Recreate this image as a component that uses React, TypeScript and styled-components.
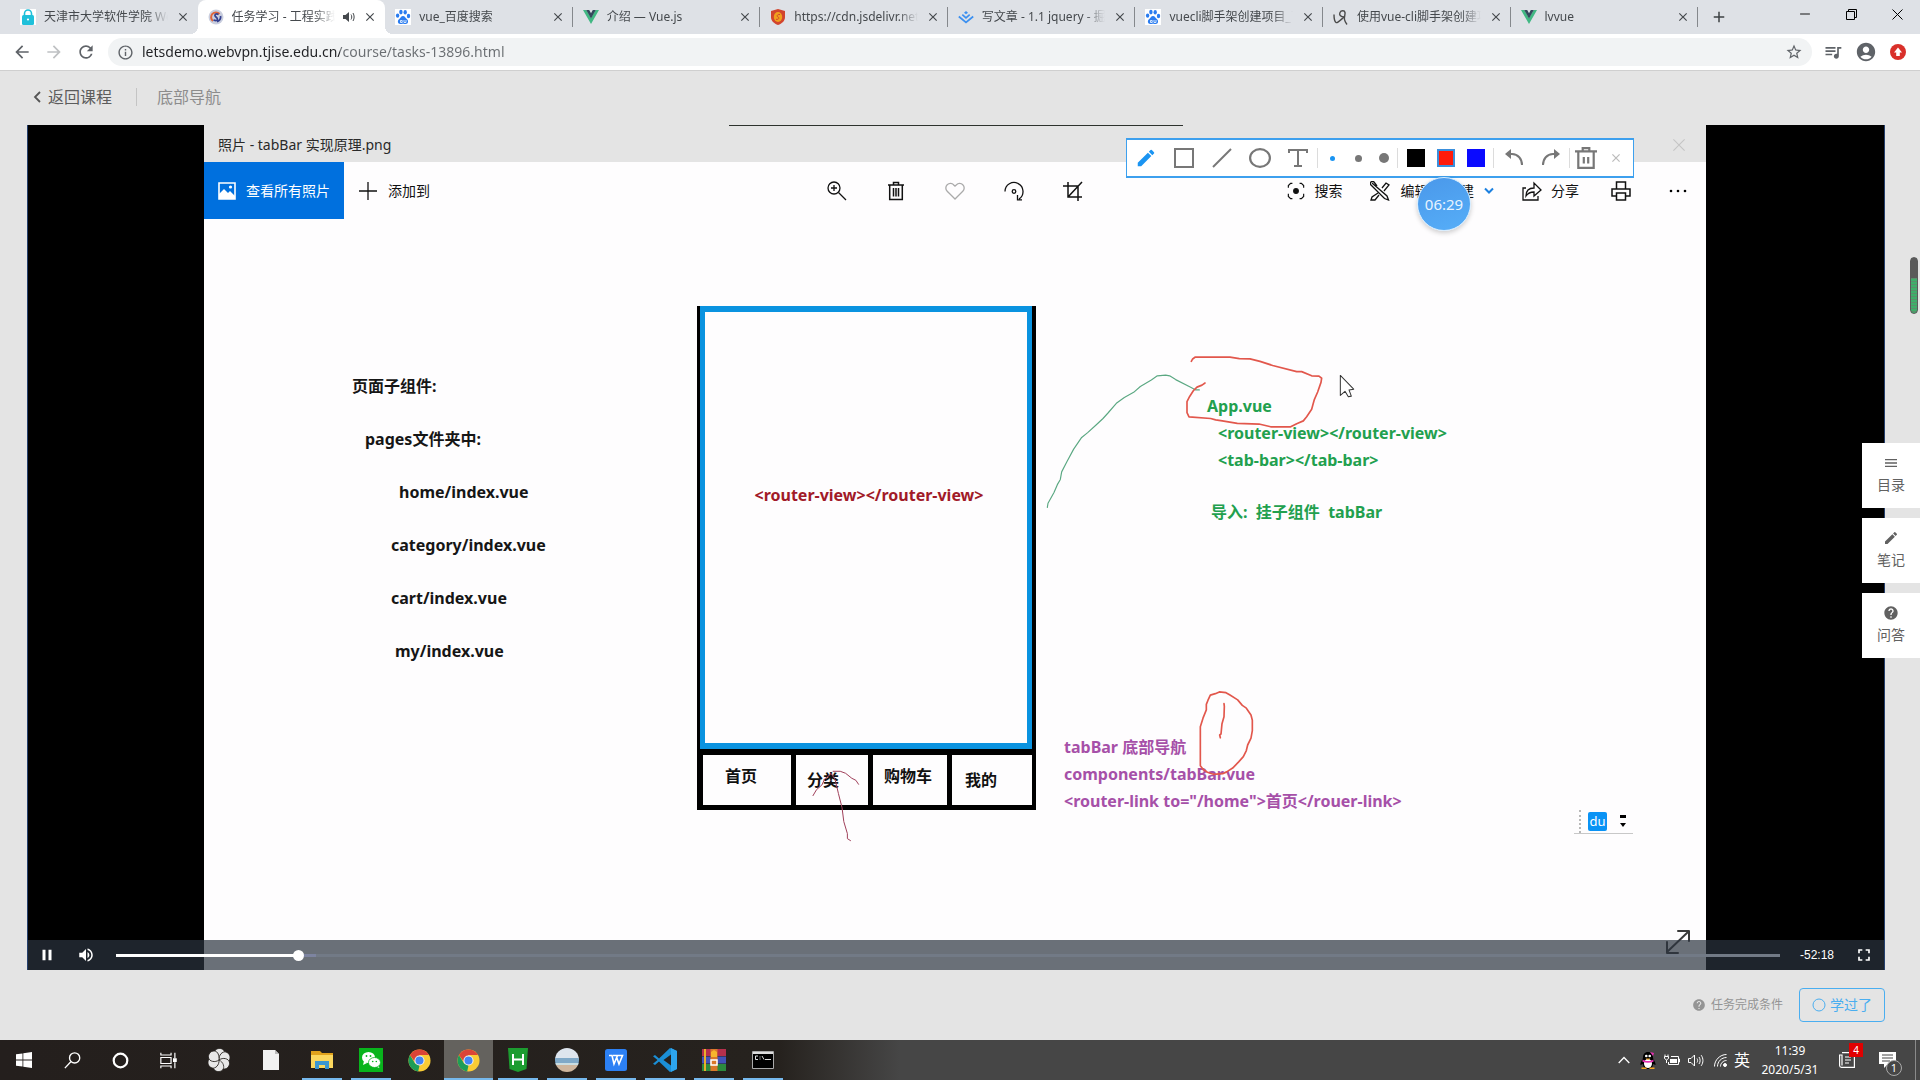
import React from "react";
import styled, { createGlobalStyle, css } from "styled-components";
import {
  MdArrowBack, MdArrowForward, MdRefresh, MdInfoOutline, MdStarBorder, MdQueueMusic,
  MdAccountCircle, MdPause, MdVolumeUp, MdFullscreen, MdEdit, MdHelp, MdClose, MdAdd, MdMenu,
} from "react-icons/md";

const Global = createGlobalStyle`
  * { box-sizing: border-box; }
  body { margin: 0; font-family: "Noto Sans", "Noto Sans CJK SC", sans-serif; font-size: 14px; color: #222; }
  button { margin: 0; padding: 0; border: 0; background: none; font: inherit; color: inherit; cursor: pointer; }
  svg { display: block; flex: none; }
`;

const Screen = styled.div`
  min-height: 100vh;
  display: flex;
  flex-direction: column;
  background: #e4e4e4;
`;

/* ---------- browser chrome ---------- */
const TabStrip = styled.header`
  display: flex;
  height: 34px;
  padding-left: 10px;
  background: #dee1e6;
`;
const TabList = styled.div`
  display: flex;
  flex: 1;
  min-width: 0;
`;
const Tab = styled.div<{ $active?: boolean; $line?: boolean }>`
  position: relative;
  flex: 1;
  min-width: 0;
  display: flex;
  align-items: center;
  gap: 8px;
  padding: 0 8px 0 10px;
  font-size: 12px;
  line-height: 16px;
  color: #45494d;
  ${(p) => p.$line && css`
    background: linear-gradient(#85888c, #85888c) right center / 1px 20px no-repeat;
  `}
  ${(p) => p.$active && css`
    background: #fff;
    border-radius: 8px 8px 0 0;
    &::before, &::after {
      content: "";
      position: absolute;
      bottom: 0;
      width: 8px;
      height: 8px;
    }
    &::before { left: -8px; background: radial-gradient(circle at 0 0, transparent 8px, #fff 8px); }
    &::after { right: -8px; background: radial-gradient(circle at 100% 0, transparent 8px, #fff 8px); }
  `}
`;
const TabTitle = styled.span`
  flex: 1;
  min-width: 0;
  overflow: hidden;
  white-space: nowrap;
  mask-image: linear-gradient(90deg, #000 calc(100% - 20px), transparent);
`;
const IconButton = styled.button<{ $w?: number }>`
  display: flex;
  align-items: center;
  justify-content: center;
  ${(p) => p.$w && `width: ${p.$w}px;`}
`;
const FullscreenButton = styled(IconButton)`
  width: 40px;
  margin-left: 10px;
`;
const NewTab = styled(IconButton)`
  width: 42px;
  color: #3c4043;
`;
const WindowControls = styled.div`
  display: flex;
  align-items: center;
  height: 28px;
  margin-left: 42px;
`;
const AddressRow = styled.div`
  display: flex;
  align-items: center;
  height: 37px;
  padding: 0 6px;
  background: #fff;
  border-bottom: 1px solid #cfcfcf;
  color: #5f6368;
`;
const AddressField = styled.label`
  flex: 1;
  display: flex;
  align-items: center;
  gap: 8px;
  height: 28px;
  margin: 0 4px 0 6px;
  padding: 0 9px;
  border-radius: 14px;
  background: #f1f3f4;
`;
const AddressInput = styled.input`
  flex: 1;
  min-width: 0;
  border: 0;
  outline: 0;
  padding: 0;
  font: 14px/20px "Noto Sans", sans-serif;
  color: #202124;
  -webkit-text-fill-color: transparent;
  background: linear-gradient(90deg, #202124 198px, #6a6e72 198px);
  background-clip: text;
  -webkit-background-clip: text;
`;

/* ---------- course page ---------- */
const Page = styled.main`
  position: relative;
  flex: 1;
  display: flex;
  flex-direction: column;
  padding: 0 35px 0 27px;
`;
const Crumbs = styled.nav`
  display: flex;
  align-items: center;
  height: 54px;
  padding-bottom: 2px;
  font-size: 16px;
  line-height: 24px;
  color: #8c8c8c;
`;
const BackLink = styled.a`
  display: flex;
  align-items: center;
  gap: 6px;
  padding: 0 24px 0 6px;
  color: #5c5c5c;
  text-decoration: none;
`;
const CrumbTitle = styled.span`
  padding-left: 21px;
  background: linear-gradient(#c4c4c4, #c4c4c4) left center / 1px 18px no-repeat;
`;
const Player = styled.section`
  position: relative;
  flex: 1;
  display: flex;
  padding: 0 178px 0 176px;
  border: 1px solid #25406e;
  border-width: 0 1px;
  background: #000;
`;
const Footer = styled.footer`
  display: flex;
  align-items: center;
  justify-content: flex-end;
  gap: 16px;
  height: 70px;
`;
const Condition = styled.span`
  display: flex;
  align-items: center;
  gap: 5px;
  font-size: 12px;
  line-height: 18px;
  color: #949494;
`;
const LearnedButton = styled.button`
  display: flex;
  align-items: center;
  justify-content: center;
  gap: 4px;
  width: 86px;
  height: 34px;
  border: 1px solid #4aaef0;
  border-radius: 4px;
  font-size: 14px;
  line-height: 20px;
  color: #4aaef0;
`;
const SideDock = styled.aside`
  position: absolute;
  right: 0;
  top: 372px;
  display: flex;
  flex-direction: column;
  gap: 10px;
`;
const DockButton = styled.button`
  display: flex;
  flex-direction: column;
  align-items: center;
  gap: 4px;
  width: 58px;
  height: 65px;
  padding-top: 12px;
  background: #fff;
  font-size: 14px;
  line-height: 20px;
  color: #616161;
`;
const Meter = styled.div`
  position: absolute;
  right: 2px;
  top: 186px;
  width: 8px;
  height: 57px;
  border: 1px solid #5a5a5a;
  border-radius: 4px;
  background:
    linear-gradient(#5a5a5a 20px, transparent 20px),
    repeating-linear-gradient(#3fae6a 0 2px, #5a8f6c 2px 3px);
`;

/* ---------- recorded desktop inside the player ---------- */
const Video = styled.div`
  position: relative;
  flex: 1;
  min-width: 0;
  display: flex;
  flex-direction: column;
  background: #fefdfe;
`;
const PhotoTitle = styled.div`
  display: flex;
  align-items: center;
  justify-content: space-between;
  height: 37px;
  padding: 2px 20px 0 14px;
  background: #e4e4e4;
  line-height: 20px;
  color: #2a2a2a;
`;
const TopRule = styled.div`
  position: absolute;
  top: 0;
  left: 525px;
  width: 454px;
  height: 1px;
  background: #2e332e;
`;
const PhotoBar = styled.div`
  display: grid;
  grid-template-columns: 1fr auto 1fr;
  height: 57px;
  line-height: 20px;
  color: #111;
`;
const BarGroup = styled.div<{ $end?: boolean; $gap?: number }>`
  display: flex;
  align-items: stretch;
  gap: ${(p) => p.$gap || 0}px;
  ${(p) => p.$end && "justify-content: flex-end; padding-right: 13px;"}
`;
const BarButton = styled.button<{ $primary?: boolean; $pad?: number; $gap?: number }>`
  display: flex;
  align-items: center;
  gap: ${(p) => p.$gap || 10}px;
  padding: 0 ${(p) => p.$pad || 0}px;
  white-space: nowrap;
  ${(p) => p.$primary && "background: #0070de; color: #fff;"}
`;
const Canvas = styled.div`
  flex: 1;
  display: grid;
  grid-template-columns: 493px 339px 1fr;
  align-items: start;
  padding-top: 87px;
  font-size: 16px;
  line-height: 27px;
  font-weight: 700;
`;
const FileList = styled.ul`
  list-style: none;
  margin: 0;
  padding: 54px 0 0 148px;
  line-height: 53px;
  color: #161616;
`;
const FileItem = styled.li<{ $in: number }>`
  padding-left: ${(p) => p.$in}px;
`;
const Phone = styled.div`
  border: solid #000;
  border-width: 0 4px 0 3px;
`;
const PhoneScreen = styled.div`
  display: flex;
  align-items: center;
  justify-content: center;
  height: 443px;
  padding: 0 0 64px 6px;
  border: 6px solid #0a93e0;
  border-width: 6px 5px;
  color: #a11a28;
`;
const PhoneTabs = styled.div`
  display: grid;
  grid-template-columns: 93px 77px 79px 1fr;
  height: 61px;
  border: solid #000;
  border-width: 6px 0 5px 3px;
`;
const PhoneTab = styled.div<{ $left: number; $raised?: boolean }>`
  display: flex;
  align-items: center;
  padding-left: ${(p) => p.$left}px;
  padding-bottom: ${(p) => (p.$raised ? 8 : 0)}px;
  white-space: nowrap;
  color: #111;
  &:not(:last-child) { border-right: 5px solid #000; }
`;
const Notes = styled.div`
  padding-top: 87px;
  white-space: pre;
`;
const Note = styled.p<{ $in: number; $color: string; $top?: number }>`
  margin: ${(p) => p.$top || 0}px 0 0;
  padding-left: ${(p) => p.$in}px;
  color: ${(p) => p.$color};
`;
const Ink = styled.svg`
  position: absolute;
  inset: 0;
  width: 100%;
  height: 100%;
  fill: none;
  pointer-events: none;
`;
const Markup = styled.div`
  position: absolute;
  top: 13px;
  right: 72px;
  display: flex;
  align-items: center;
  height: 40px;
  padding-right: 2px;
  border: 2px solid #3da0ee;
  border-width: 2px 1px;
  background: #fff;
  color: #777;
`;
const Rule = styled.span`
  width: 1px;
  height: 20px;
  margin-right: 1px;
  background: #dcdcdc;
`;
const Dot = styled.span<{ $d: number; $on?: boolean }>`
  width: ${(p) => p.$d}px;
  height: ${(p) => p.$d}px;
  border-radius: 50%;
  background: ${(p) => (p.$on ? "#1a94f2" : "#777")};
`;
const Swatches = styled.div`
  display: flex;
  gap: 12px;
  padding: 0 8px;
`;
const Swatch = styled.button<{ $c: string; $on?: boolean }>`
  width: 18px;
  height: 18px;
  background: ${(p) => p.$c};
  border: ${(p) => (p.$on ? "2px solid #3a8fdc" : "0")};
`;
const Timer = styled.div`
  position: absolute;
  top: 52px;
  right: 235px;
  display: flex;
  align-items: center;
  justify-content: center;
  width: 54px;
  height: 54px;
  border: 1px solid #d4ecff;
  border-radius: 50%;
  background: linear-gradient(160deg, #4a98ea, #56aef8);
  box-shadow: 0 2px 5px rgba(0, 0, 0, 0.2);
  font-size: 15px;
  line-height: 20px;
  color: #e8f4ff;
`;
const ImeBar = styled.div`
  position: absolute;
  right: 73px;
  bottom: 136px;
  display: flex;
  align-items: center;
  gap: 7px;
  width: 59px;
  height: 25px;
  padding-left: 5px;
  border-bottom: 1px solid #c8c8c8;
`;
const ImeGrip = styled.span`
  height: 23px;
  border-left: 2px dotted #b8b8b8;
`;
const ImeLogo = styled.span`
  flex: none;
  width: 19px;
  height: 19px;
  border-radius: 2px;
  background: #0a93f5;
  font-size: 13px;
  line-height: 18px;
  text-align: center;
  color: #fff;
`;
const Controls = styled.div`
  position: absolute;
  left: 0;
  right: 0;
  bottom: 0;
  display: flex;
  align-items: center;
  height: 30px;
  background: rgba(43, 51, 63, 0.7);
  color: #fff;
`;
const Seek = styled.input`
  appearance: none;
  flex: 1;
  height: 3px;
  margin: 0 20px 0 10px;
  background: linear-gradient(90deg, #fff 11%, #7d84a0 11%, #7d84a0 12%, #727a86 12%);
  outline: 0;
  &::-webkit-slider-thumb {
    appearance: none;
    width: 11px;
    height: 11px;
    border-radius: 50%;
    background: #fff;
  }
`;
const Remaining = styled.span`
  font: 12px/16px "Liberation Sans", sans-serif;
`;

/* ---------- desktop task bar ---------- */
const TaskBar = styled.footer`
  display: flex;
  height: 40px;
  background: linear-gradient(90deg, #241f1d 0, #26221e 780px, #464646 900px);
  color: #fff;
`;
const Task = styled.button<{ $w?: number; $open?: boolean; $active?: boolean }>`
  display: flex;
  align-items: center;
  justify-content: center;
  width: ${(p) => p.$w || 49}px;
  ${(p) => p.$open && "background: linear-gradient(#76b9ed, #76b9ed) center bottom / 40px 2px no-repeat;"}
  ${(p) => p.$active && "background: linear-gradient(#76b9ed, #76b9ed) center bottom / 100% 2px no-repeat, #64625e;"}
`;
const Tray = styled.div`
  display: flex;
  align-items: center;
  margin-left: auto;
`;
const Clock = styled.time`
  width: 68px;
  margin-right: 11px;
  font-size: 12px;
  line-height: 19px;
  text-align: center;
`;
const Ime = styled.button`
  width: 28px;
  font-size: 16px;
  line-height: 20px;
`;
const Notice = styled.button<{ $w: number }>`
  position: relative;
  display: flex;
  align-items: center;
  justify-content: center;
  width: ${(p) => p.$w}px;
  height: 40px;
`;
const RedBadge = styled.span`
  position: absolute;
  top: 3px;
  right: -4px;
  width: 14px;
  height: 14px;
  background: #e00000;
  font-size: 10px;
  line-height: 14px;
`;
const CountBadge = styled.span`
  position: absolute;
  top: 20px;
  right: 13px;
  width: 16px;
  height: 16px;
  border: 1px solid #aaa;
  border-radius: 50%;
  background: #464646;
  font-size: 11px;
  line-height: 14px;
`;
const DesktopEdge = styled.span`
  width: 5px;
  height: 40px;
  border-left: 1px solid #8a8a8a;
`;

/* ---------- drawings ---------- */
const Vue = () => (
  <svg width="16" height="16" viewBox="0 0 16 16"><path d="M0 1h3.3L8 9l4.7-8H16L8 15z" fill="#41b883" /><path d="M3.2 1h3L8 4.200l1.800-3.200h3L8 9.400z" fill="#35495e" /></svg>
);
const Baidu = () => (
  <svg width="16" height="16" viewBox="0 0 16 16"><path fill="#fff" d="M0 0h16v16H0z" /><g fill="#2a7cf0"><ellipse cx="2.600" cy="6.600" rx="1.700" ry="2.200" /><ellipse cx="5.900" cy="3.100" rx="1.700" ry="2.300" /><ellipse cx="10.200" cy="3.200" rx="1.700" ry="2.300" /><ellipse cx="13.500" cy="7" rx="1.700" ry="2.200" /><path d="M8 7c2 0 2.500 2 4 3.300 1.600 1.400 1.500 4.700-1.300 4.700-1.200 0-1.700-.3-2.700-.3s-1.500.3-2.700.3c-2.800 0-3-3.300-1.300-4.700C5.500 9 6 7 8 7z" /></g><path d="M5.500 11.500h1.700v2H5.500zM9 11v2.500h2V11" fill="none" stroke="#fff" strokeWidth=".8" /></svg>
);
const Lock = () => (
  <svg width="16" height="16" viewBox="0 0 16 16"><path fill="#fff" d="M0 0h16v16H0z" /><path d="M4.500 7V4.500a3.500 3.500 0 0 1 7 0V7" fill="none" stroke="#1fc0da" strokeWidth="1.600" /><rect x="2" y="6" width="12" height="10" rx="1.500" fill="#1fc0da" /><circle cx="8" cy="10.500" r="1.100" fill="#fff" /></svg>
);
const Swirl = () => (
  <svg width="16" height="16" viewBox="0 0 16 16"><circle cx="8" cy="8" r="7.500" fill="#c9cede" /><path d="M11.500 5A4.800 4.800 0 1 0 5 12" fill="none" stroke="#e0663c" strokeWidth="2" /><path d="M10.500 5.500C8 4 5.500 6 8 8s2 4.500-2.500 3M9 12.500A4.500 4.500 0 0 0 12.500 7" fill="none" stroke="#34408f" strokeWidth="1.800" /></svg>
);
const Shield = () => (
  <svg width="16" height="16" viewBox="0 0 16 16"><path d="M8 0l7 2v6c0 4-3 6.500-7 8-4-1.500-7-4-7-8V2z" fill="#d2452d" /><ellipse cx="8" cy="8" rx="4.200" ry="5" fill="#f0a01e" /><path d="M10 5.500C7 5 6.500 7.500 8 8s1 3-2 2.300" fill="none" stroke="#d2452d" /></svg>
);
const Juejin = () => (
  <svg width="16" height="16" viewBox="0 0 16 16" fill="none" stroke="#3c90f0" strokeWidth="1.700"><path d="M.8 7.500L8 13.500l7.200-6M4.300 5.700L8 8.800l3.700-3.100" /><path d="M8 2l2 1.700L8 5.300 6 3.700z" fill="#3c90f0" stroke="none" /></svg>
);
const Scribble = () => (
  <svg width="16" height="16" viewBox="0 0 16 16" fill="none" stroke="#4a4a4a" strokeWidth="1.400"><path d="M1 5.500c0 3 .5 7 2 8s4.500-2.500 8-5.500" /><path d="M11.500 8C7 8 6 5.500 7 3.500s4.500-2.500 5 0c.4 2-1 4-.5 7 .3 2 1.500 3.500 2.500 5" /></svg>
);
const Sound = () => (
  <svg width="12" height="10" viewBox="0 0 12 10"><path d="M0 3h2.500L6 0v10L2.500 7H0z" fill="#45494d" /><path d="M8 2.500c1 1.500 1 3.500 0 5M10 1c1.500 2.500 1.500 5.500 0 8" fill="none" stroke="#45494d" /></svg>
);
const Chrome = () => (
  <svg width="23" height="23" viewBox="0 0 24 24"><circle cx="12" cy="12" r="11.500" fill="#f9cc35" /><path d="M2 6.300L7.400 15 12 17.200 10.600 23.400A11.500 11.500 0 0 1 2 6.300z" fill="#1d9d58" /><path d="M2 6.300A11.500 11.500 0 0 1 22 6.300H12L7 13z" fill="#db4437" /><circle cx="12" cy="12" r="5.300" fill="#f1f1f1" /><circle cx="12" cy="12" r="4.200" fill="#4285f4" /></svg>
);
const Line = ({ s = 20, w = 1.300, children }: { s?: number; w?: number; children: React.ReactNode }) => (
  <svg width={s} height={s} viewBox="0 0 20 20" fill="none" stroke="currentColor" strokeWidth={w}>{children}</svg>
);

const tabs = [
  { icon: <Lock />, title: "天津市大学软件学院 WebVPN", line: false },
  { icon: <Swirl />, title: "任务学习 - 工程实践", active: true, sound: true },
  { icon: <Baidu />, title: "vue_百度搜索", line: true },
  { icon: <Vue />, title: "介绍 — Vue.js", line: true },
  { icon: <Shield />, title: "https://cdn.jsdelivr.net/npm", line: true },
  { icon: <Juejin />, title: "写文章 - 1.1 jquery - 掘金", line: true },
  { icon: <Baidu />, title: "vuecli脚手架创建项目_百度", line: true },
  { icon: <Scribble />, title: "使用vue-cli脚手架创建项目", line: true },
  { icon: <Vue />, title: "lvvue", line: true },
];

const files: [string, number][] = [
  ["页面子组件:", 0], ["pages文件夹中:", 13], ["home/index.vue", 47],
  ["category/index.vue", 39], ["cart/index.vue", 39], ["my/index.vue", 43],
];

const GREEN = "#22a04e";
const PURPLE = "#a650a8";

function BrowserChrome() {
  return (
    <>
      <TabStrip>
        <TabList>
          {tabs.map((t) => (
            <Tab key={t.title} $active={t.active} $line={t.line}>
              {t.icon}
              <TabTitle>{t.title}</TabTitle>
              {t.sound && <Sound />}
              <IconButton aria-label="关闭标签页"><MdClose size={14} /></IconButton>
            </Tab>
          ))}
        </TabList>
        <NewTab aria-label="新标签页"><MdAdd size={18} /></NewTab>
        <WindowControls>
          <IconButton $w={46} aria-label="最小化"><Line s={14}><path d="M3 10h14" stroke="#000" /></Line></IconButton>
          <IconButton $w={46} aria-label="还原">
            <svg width="11" height="11" viewBox="0 0 11 11" fill="none" stroke="#000"><path d="M.5 2.500h8v8h-8zM2.500 2.500v-2h8v8h-2" /></svg>
          </IconButton>
          <IconButton $w={46} aria-label="关闭">
            <svg width="11" height="11" viewBox="0 0 11 11" stroke="#000"><path d="M.5.5l10 10M10.500.5l-10 10" /></svg>
          </IconButton>
        </WindowControls>
      </TabStrip>
      <AddressRow>
        <IconButton $w={32} aria-label="后退"><MdArrowBack size={20} /></IconButton>
        <IconButton $w={32} aria-label="前进"><MdArrowForward size={20} color="#bfc1c3" /></IconButton>
        <IconButton $w={32} aria-label="刷新"><MdRefresh size={20} /></IconButton>
        <AddressField>
          <MdInfoOutline size={17} />
          <AddressInput aria-label="地址" defaultValue="letsdemo.webvpn.tjise.edu.cn/course/tasks-13896.html" />
          <MdStarBorder size={18} />
        </AddressField>
        <IconButton $w={33} aria-label="媒体"><MdQueueMusic size={20} /></IconButton>
        <IconButton $w={33} aria-label="用户"><MdAccountCircle size={22} /></IconButton>
        <IconButton $w={32} aria-label="更新">
          <svg width="16" height="16" viewBox="0 0 16 16"><circle cx="8" cy="8" r="8" fill="#d9302a" /><path d="M8 3.500L12 8.500H9.800V12H6.200V8.500H4z" fill="#fff" /></svg>
        </IconButton>
      </AddressRow>
    </>
  );
}

function PhotoToolbar() {
  return (
    <PhotoBar>
      <BarGroup>
        <BarButton $primary $pad={14}>
          <svg width="18" height="18" viewBox="0 0 18 18"><path d="M1 1h16v16H1z" fill="none" stroke="#fff" strokeWidth="1.600" /><path d="M1 12l5-5 4 4 2-2 5 5v3H1z" fill="#fff" /><circle cx="12.500" cy="5" r="1.600" fill="#fff" /></svg>
          查看所有照片
        </BarButton>
        <BarButton $pad={14}>
          <Line s={20}><path d="M10 1v18M1 10h18" /></Line>添加到
        </BarButton>
      </BarGroup>
      <BarGroup $gap={39}>
        <BarButton aria-label="放大"><Line><circle cx="7" cy="7" r="6" /><path d="M11.500 11.500L19 19M4 7h6M7 4v6" /></Line></BarButton>
        <BarButton aria-label="删除"><Line w={1.500}><path d="M2 4h16M7.500 4V1.500h5V4M3.700 4v14.500h12.600V4M7.500 7v8.500M10 7v8.500M12.500 7v8.500" /></Line></BarButton>
        <BarButton aria-label="收藏"><Line><path d="M10 18L2.200 10.200a4.500 4.500 0 0 1 0-6.500c2-2 5-1.700 6.300 0L10 5.200l1.500-1.500c1.500-1.700 4.500-2 6.300 0a4.500 4.500 0 0 1 0 6.500z" stroke="#aaa" /></Line></BarButton>
        <BarButton aria-label="旋转"><Line><path d="M1 10.500A9 9 0 1 1 15 18M13.500 14v4.800h4.500" /><circle cx="10" cy="10.500" r="1.800" /></Line></BarButton>
        <BarButton aria-label="裁剪"><Line w={1.500}><path d="M5 1v15h14M0 5h15v15M5 16L19 1" /></Line></BarButton>
      </BarGroup>
      <BarGroup $end $gap={28}>
        <BarButton $gap={9}>
          <Line s={18}><path d="M6 1.500H4L1.500 4v2.500M14 1.500h2L18.500 4v2.500M1.500 13v3L4 18.500h2M18.500 13v3L16 18.500h-2" /><circle cx="10" cy="10" r="2.600" fill="currentColor" /></Line>搜索
        </BarButton>
        <BarButton $gap={10}>
          <Line><path d="M2 2l15 13 1.500 4-4-1.500L1 4a2 2 0 0 1 3-3l3 4M12 7l4-5 3 2-5 6M8 12l-6 4-1 3h4l4-5" /></Line>
          编辑 &amp; 创建
          <svg width="10" height="10" viewBox="0 0 10 10" fill="none" stroke="#1c80e0" strokeWidth="2"><path d="M1 2.500l4 4 4-4" /></svg>
        </BarButton>
        <BarButton $gap={9}>
          <Line><path d="M4 7H1v12h15v-4M4 15c0-5 3-8 8-8V2l7 7-7 6v-4c-4 0-6 1-8 4z" /></Line>分享
        </BarButton>
        <BarButton $pad={4} aria-label="打印"><Line w={1.500}><path d="M5.500 8V1h9v7M5.500 15H1V8h18v7h-4.500M5.500 12h9v7h-9z" /></Line></BarButton>
        <BarButton $pad={6} aria-label="更多">
          <svg width="18" height="4" viewBox="0 0 18 4"><circle cx="2" cy="2" r="1.300" /><circle cx="9" cy="2" r="1.300" /><circle cx="16" cy="2" r="1.300" /></svg>
        </BarButton>
      </BarGroup>
    </PhotoBar>
  );
}

function Annotator() {
  return (
    <Markup>
      <IconButton $w={38} aria-label="画笔"><MdEdit size={22} color="#1a94f2" /></IconButton>
      <IconButton $w={38} aria-label="矩形"><Line w={2}><path d="M1 1h18v18H1z" /></Line></IconButton>
      <IconButton $w={38} aria-label="直线"><Line w={2}><path d="M1 19L19 1" /></Line></IconButton>
      <IconButton $w={38} aria-label="椭圆"><Line s={22} w={2}><ellipse cx="10" cy="10" rx="9" ry="8" /></Line></IconButton>
      <IconButton $w={38} aria-label="文字"><Line w={2}><path d="M1 5V2h18v3M10 2v16M6 18h8" /></Line></IconButton>
      <Rule />
      <IconButton $w={26} aria-label="细"><Dot $d={5} $on /></IconButton>
      <IconButton $w={26} aria-label="中"><Dot $d={7} /></IconButton>
      <IconButton $w={26} aria-label="粗"><Dot $d={10} /></IconButton>
      <Rule />
      <Swatches>
        <Swatch $c="#000" aria-label="黑" />
        <Swatch $c="#ff1a0a" $on aria-label="红" />
        <Swatch $c="#0a0aff" aria-label="蓝" />
      </Swatches>
      <Rule />
      <IconButton $w={37} aria-label="撤销"><Line w={2}><path d="M3 6h5c6 0 10 5 10 11" /><path d="M7 1v10L1 6z" fill="currentColor" stroke="none" /></Line></IconButton>
      <IconButton $w={37} aria-label="重做"><Line w={2}><path d="M17 6h-5C6 6 2 11 2 17" /><path d="M13 1v10l6-5z" fill="currentColor" stroke="none" /></Line></IconButton>
      <Rule />
      <IconButton $w={30} aria-label="清空"><Line s={22} w={2}><path d="M0 4h20M7 4V1h6v3M3 4v15h14V4M8 9v6M12 9v6" /></Line></IconButton>
      <IconButton $w={30} aria-label="关闭标注"><Line s={8}><path d="M1 1l18 18M19 1L1 19" stroke="#bbb" strokeWidth="3" /></Line></IconButton>
    </Markup>
  );
}

function Recording() {
  return (
    <Video>
      <PhotoTitle>
        照片 - tabBar 实现原理.png
        <Line s={14}><path d="M2 2l16 16M18 2L2 18" stroke="#c4c4c4" strokeWidth="1.500" /></Line>
      </PhotoTitle>
      <TopRule />
      <PhotoToolbar />
      <Canvas>
        <FileList>
          {files.map(([name, indent]) => <FileItem key={name} $in={indent}>{name}</FileItem>)}
        </FileList>
        <Phone>
          <PhoneScreen>{"<router-view></router-view>"}</PhoneScreen>
          <PhoneTabs>
            <PhoneTab $left={22} $raised>首页</PhoneTab>
            <PhoneTab $left={11}>分类</PhoneTab>
            <PhoneTab $left={11} $raised>购物车</PhoneTab>
            <PhoneTab $left={13}>我的</PhoneTab>
          </PhoneTabs>
        </Phone>
        <Notes>
          <Note $in={171} $color={GREEN}>App.vue</Note>
          <Note $in={182} $color={GREEN}>{"<router-view></router-view>"}</Note>
          <Note $in={182} $color={GREEN}>{"<tab-bar></tab-bar>"}</Note>
          <Note $in={175} $color={GREEN} $top={25}>{"导入:  挂子组件  tabBar"}</Note>
          <Note $in={28} $color={PURPLE} $top={208}>tabBar 底部导航</Note>
          <Note $in={28} $color={PURPLE}>components/tabBar.vue</Note>
          <Note $in={28} $color={PURPLE}>{'<router-link to="/home">首页</rouer-link>'}</Note>
        </Notes>
      </Canvas>
      <Ink viewBox="0 0 1502 845" preserveAspectRatio="xMinYMin meet" strokeLinejoin="round" strokeLinecap="round">
        <g transform="translate(826 205) scale(.33333 .3444)">
          <path d="M52 515l2-12 18-31 10-23 9-15 4-22 16-30 20-36 24-34 18-14 26-23 20-18 15-16 25-28 24-17 28-15 20-17 33-19 18-12 25-2 12 2 18 11 45 22 15 8h11" stroke="#5aa882" strokeWidth="3.500" />
          <path d="M484 91l4-7 7-5h105l28 4 32 1 30 7 38 12 72 18h15l30 12 22 1 8 6-2 12-10 28-10 22-8 28-15 22-10 12-20 8-18 9h-60l-35-8-65-2-45-7-20-3-15-4-65-5-6-12v-32l8-15 12-18 10-9 15-6 9-6" stroke="#e2574c" strokeWidth="5" />
          <path d="M541 1060l15-4 12-5 20 2 12 7 23 14 14 16 12 8 14 20 4 15v30l-4 22-10 20-4 16-9 18-14 15-18 18-18 11-12 5-28 2-18-6-14-10-7-9v-113l8-25 10-24v-16l5-12z" stroke="#e2574c" strokeWidth="5" />
          <path d="M582 1085l1 8-1 30-6 20-3 30-4 3 2 8" stroke="#e2574c" strokeWidth="5" />
          <path d="M931 132v58l14-12 10 16 9-2-7-18 14-2z" fill="#fff" stroke="#333" strokeWidth="3" />
        </g>
        <g transform="translate(126 225) scale(.4464 .3333)" stroke="#a0405a">
          <path vectorEffect="non-scaling-stroke" d="M1127 1264h16l12 6 14 15 9 6 6 12M1082 1337l8-18 12-14 6-18 10-10 4-7 8 15 3 12 6 34 8 42 4 42 8 36v15l7 6" />
        </g>
        <path d="M1463 827l21-20M1474 806h11v10M1463 817v11h11" stroke="#3a3a3a" strokeWidth="2" />
      </Ink>
      <Annotator />
      <Timer>06:29</Timer>
      <ImeBar>
        <ImeGrip />
        <ImeLogo>du</ImeLogo>
        <svg width="24" height="12" viewBox="0 0 24 12"><path d="M6 0h6v3H6zM6 8h6l-3 4z" /></svg>
      </ImeBar>
    </Video>
  );
}

function TaskIcons() {
  return (
    <>
      <Task $w={48} aria-label="开始">
        <svg width="16" height="16" viewBox="0 0 16 16" fill="#fff"><path d="M0 2.300L6.500 1.400v6.200H0zM7.300 1.300L16 0v7.600H7.300zM0 8.400h6.500v6.200L0 13.700zM7.300 8.400H16V16l-8.700-1.300z" /></svg>
      </Task>
      <Task $w={48} aria-label="搜索"><Line s={17} w={1.600}><circle cx="12.500" cy="7" r="6" /><path d="M8 11.500L1 19" /></Line></Task>
      <Task $w={48} aria-label="Cortana"><Line s={17} w={2.600}><circle cx="10" cy="10" r="8" /></Line></Task>
      <Task $w={48} aria-label="任务视图">
        <Line s={17} w={1.400}><path d="M1 1v2.500h12V1M1 6.500h12v7H1zM1 19v-2.500h12V19M17.500 1v6M17.500 12v7" /><path d="M16 8h3v3h-3z" fill="#fff" /></Line>
      </Task>
      <Task $w={53} aria-label="风车">
        <svg width="22" height="24" viewBox="0 0 22 24" fill="#e8e8e8" stroke="#26221e" strokeWidth=".8">
          {[0, 60, 120, 180, 240, 300].map((a) => <path key={a} transform={`rotate(${a} 11 12)`} d="M11 12C6.500 10 5 4.500 7.500 2S15 0 16.500 3.500 15 10 11 12z" />)}
        </svg>
      </Task>
      <Task $w={52} aria-label="文档">
        <svg width="16" height="22" viewBox="0 0 16 22"><path d="M0 1h12l4 4v16H0z" fill="#f2f2f2" /><path d="M12 1v4h4" fill="#bbb" /></svg>
      </Task>
      <Task $open aria-label="文件资源管理器">
        <svg width="22" height="18" viewBox="0 0 22 18"><path d="M0 0h9l2 2h11v15H0z" fill="#e0a21c" /><path d="M0 4h22v13H0z" fill="#fbd75e" /><path d="M4 18v-8h14v8h-4v-4H8v4z" fill="#3c97d0" /></svg>
      </Task>
      <Task $open aria-label="微信">
        <svg width="24" height="24" viewBox="0 0 24 24"><path d="M0 0h24v24H0z" fill="#08b41c" /><ellipse cx="9.500" cy="9.500" rx="6.500" ry="5.500" fill="#fff" /><path d="M5 13l-1 4 4-2zM19 17l1.500 3-4-1.500z" fill="#fff" /><ellipse cx="15.500" cy="14.500" rx="6" ry="5" fill="#fff" stroke="#08b41c" strokeWidth=".8" /><g fill="#08b41c"><circle cx="7.500" cy="8" r=".9" /><circle cx="11.500" cy="8" r=".9" /><circle cx="13.700" cy="13.500" r=".8" /><circle cx="17.300" cy="13.500" r=".8" /></g></svg>
      </Task>
      <Task aria-label="Chrome"><Chrome /></Task>
      <Task $active aria-label="Chrome 窗口"><Chrome /></Task>
      <Task $open aria-label="HBuilder">
        <svg width="20" height="24" viewBox="0 0 20 24"><path d="M0 0h20l-1.500 21L10 24l-8.500-3z" fill="#1c9c30" /><path d="M5 6v11M15 6v11M5 11.500h10" stroke="#fff" strokeWidth="2" /></svg>
      </Task>
      <Task $open aria-label="海滩">
        <svg width="24" height="24" viewBox="0 0 24 24"><clipPath id="sea"><circle cx="12" cy="12" r="12" /></clipPath><g clipPath="url(#sea)"><path d="M0 0h24v12H0z" fill="#dde5ee" /><path d="M0 10h24v6H0z" fill="#7fa9c8" /><path d="M0 16h24v8H0z" fill="#cdb59d" /><path d="M0 15h24v2H0z" fill="#c9dde2" /></g></svg>
      </Task>
      <Task $open aria-label="WPS">
        <svg width="22" height="22" viewBox="0 0 22 22"><rect width="22" height="22" rx="2.500" fill="#2c80f4" /><path d="M4 6.500h3l2 8.500 3.500-8.500M8 6.500h9.500L14 15l-2.500-7" fill="none" stroke="#fff" strokeWidth="1.600" /></svg>
      </Task>
      <Task $open aria-label="VS Code">
        <svg width="24" height="24" viewBox="0 0 24 24"><path d="M17 0l7 3v18l-7 3L6 13.500 2 17l-2-1.300L4.500 12 0 8.300 2 7l4 3.500zM18 6.500L10.500 12l7.500 5.500z" fill="#1b8fd6" fillRule="evenodd" /><path d="M18 0l6 3v18l-6 3z" fill="#2da5ee" /></svg>
      </Task>
      <Task $open aria-label="WinRAR">
        <svg width="24" height="22" viewBox="0 0 24 22"><path d="M0 0h24v7H0z" fill="#b5304c" /><path d="M0 7.500h24v7H0z" fill="#4352b8" /><path d="M0 15h24v7H0z" fill="#2c8a3e" /><path d="M2 0h2v22H2z" fill="#e8b02a" /><path d="M8.500 0h7v22h-7z" fill="#d9782a" /><path d="M9 3l3-2 3 2v5H9z" fill="#f7b52c" /><path d="M9 11h6v5H9z" fill="none" stroke="#fff" strokeWidth="1.500" /></svg>
      </Task>
      <Task $open aria-label="命令提示符">
        <svg width="22" height="18" viewBox="0 0 22 18"><path d="M.5.5h21v17H.5z" fill="#000" stroke="#aaa" /><path d="M1 1h20v2H1z" fill="#ddd" /><path d="M6 5H3.500v3.500H6M8 5.500v1M8 7.500v1M10 5l2 3.500M13 8.500h6" fill="none" stroke="#ddd" /></svg>
      </Task>
    </>
  );
}

function SystemTray() {
  return (
    <Tray>
      <IconButton $w={16} aria-label="隐藏的图标"><svg width="12" height="8" viewBox="0 0 12 8" fill="none" stroke="#fff" strokeWidth="1.300"><path d="M.7 7L6 1.500 11.300 7" /></svg></IconButton>
      <IconButton $w={32} aria-label="QQ">
        <svg width="16" height="17" viewBox="0 0 16 17"><path d="M8 0c3.500 0 5 2.500 5 5.500 0 2 3 5 2.500 7.500L13 12c0 3-2 5-5 5s-5-2-5-5L.5 13C0 10.500 3 7.500 3 5.500 3 2.500 4.500 0 8 0z" fill="#000" /><ellipse cx="8" cy="11.500" rx="4" ry="4.500" fill="#fff" /><path d="M2.500 7.500c4 2 7 2 11 0v2.200c-4 1.500-7 1.500-11 0zM10 0l4 1-1 3z" fill="#e42fb0" /><circle cx="6.300" cy="4" r="1.300" fill="#fff" /><circle cx="9.700" cy="4" r="1.300" fill="#fff" /><path d="M5.500 6.500h5L8 8zM1.500 15.500h5V17h-5zM9.500 15.500h5V17h-5z" fill="#f5a623" /></svg>
      </IconButton>
      <IconButton $w={16} aria-label="电池">
        <svg width="16" height="12" viewBox="0 0 16 12" fill="none" stroke="#fff"><path d="M7 2.500h7.500v8H4.500V8M14.500 5h1v3h-1M1 .5v2M4 .5v2M.5 2.500h4v2l-2 1.500-2-1.500zM2.500 6v3" /><path d="M6 5h7v4H6z" fill="#fff" stroke="none" /></svg>
      </IconButton>
      <IconButton $w={32} aria-label="音量">
        <svg width="16" height="13" viewBox="0 0 16 13" fill="none" stroke="#fff"><path d="M.5 4.500H3l3.500-3.500v11L3 8.500H.5zM9 4.500c.8 1.300.8 2.700 0 4M11 3c1.500 2.300 1.500 4.700 0 7M13.200 1.200c2.300 3.500 2.300 7.100 0 10.600" /></svg>
      </IconButton>
      <IconButton $w={16} aria-label="网络">
        <svg width="13" height="13" viewBox="0 0 13 13" fill="none" stroke="#fff"><path d="M.5 12.500C.5 6 6 .5 12.500.5M3.500 12.500c0-5 4-9 9-9M6.500 12.500c0-3.300 2.700-6 6-6" /><circle cx="11" cy="11" r="1.500" fill="#fff" /></svg>
      </IconButton>
      <Ime>英</Ime>
      <Clock dateTime="2020-05-31T11:39">11:39<br />2020/5/31</Clock>
      <Notice $w={24} aria-label="资讯">
        <svg width="16" height="16" viewBox="0 0 16 16" fill="none" stroke="#fff" strokeWidth="1.200"><path d="M3 .6h12.400v14.800H2.500A2 2 0 0 1 .6 13.500V3H3v10.500M6 5h6M6 8h6M6 11h4" /></svg>
        <RedBadge>4</RedBadge>
      </Notice>
      <Notice $w={56} aria-label="通知">
        <svg width="17" height="16" viewBox="0 0 17 16"><path d="M0 0h17v12H9l-4 4v-4H0z" fill="#fff" /><path d="M3 3h11M3 6h11M3 9h8" stroke="#464646" /></svg>
        <CountBadge>1</CountBadge>
      </Notice>
      <DesktopEdge />
    </Tray>
  );
}

export default function App() {
  return (
    <Screen>
      <Global />
      <BrowserChrome />
      <Page>
        <Crumbs>
          <BackLink href="#course">
            <svg width="9" height="12" viewBox="0 0 9 12" fill="none" stroke="#555" strokeWidth="1.800"><path d="M7 1L2 6l5 5" /></svg>
            返回课程
          </BackLink>
          <CrumbTitle>底部导航</CrumbTitle>
        </Crumbs>
        <Player>
          <Recording />
          <Controls>
            <IconButton $w={38} aria-label="暂停"><MdPause size={18} /></IconButton>
            <IconButton $w={40} aria-label="静音"><MdVolumeUp size={18} /></IconButton>
            <Seek type="range" aria-label="播放进度" min={0} max={1000} defaultValue={107} />
            <Remaining>-52:18</Remaining>
            <FullscreenButton aria-label="全屏"><MdFullscreen size={20} /></FullscreenButton>
          </Controls>
        </Player>
        <Footer>
          <Condition><MdHelp size={14} />任务完成条件</Condition>
          <LearnedButton>
            <svg width="14" height="14" viewBox="0 0 14 14" fill="none" stroke="currentColor"><circle cx="7" cy="7" r="6" /></svg>
            学过了
          </LearnedButton>
        </Footer>
        <Meter />
        <SideDock>
          <DockButton><MdMenu size={16} />目录</DockButton>
          <DockButton><MdEdit size={16} />笔记</DockButton>
          <DockButton><MdHelp size={16} />问答</DockButton>
        </SideDock>
      </Page>
      <TaskBar>
        <TaskIcons />
        <SystemTray />
      </TaskBar>
    </Screen>
  );
}
